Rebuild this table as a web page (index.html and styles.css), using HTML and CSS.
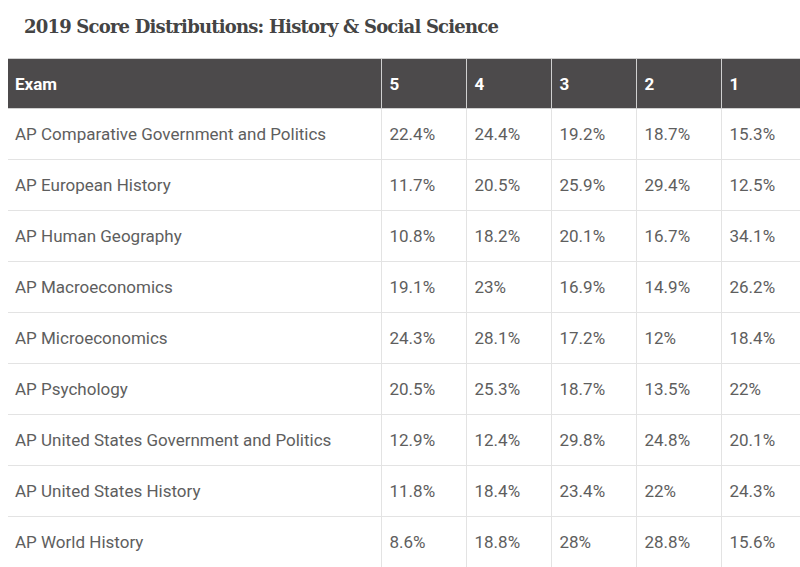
FILE: index.html
```html
<!DOCTYPE html>
<html>
<head>
<meta charset="utf-8">
<link rel="stylesheet" href="styles.css">
</head>
<body>
<h2 class="title">2019 Score Distributions: History &amp; Social Science</h2>
<table class="scores">
  <colgroup>
    <col class="col-exam">
    <col class="col-score"><col class="col-score"><col class="col-score"><col class="col-score"><col>
  </colgroup>
  <thead>
    <tr><th>Exam</th><th>5</th><th>4</th><th>3</th><th>2</th><th>1</th></tr>
  </thead>
  <tbody>
    <tr><td>AP Comparative Government and Politics</td><td>22.4%</td><td>24.4%</td><td>19.2%</td><td>18.7%</td><td>15.3%</td></tr>
    <tr><td>AP European History</td><td>11.7%</td><td>20.5%</td><td>25.9%</td><td>29.4%</td><td>12.5%</td></tr>
    <tr><td>AP Human Geography</td><td>10.8%</td><td>18.2%</td><td>20.1%</td><td>16.7%</td><td>34.1%</td></tr>
    <tr><td>AP Macroeconomics</td><td>19.1%</td><td>23%</td><td>16.9%</td><td>14.9%</td><td>26.2%</td></tr>
    <tr><td>AP Microeconomics</td><td>24.3%</td><td>28.1%</td><td>17.2%</td><td>12%</td><td>18.4%</td></tr>
    <tr><td>AP Psychology</td><td>20.5%</td><td>25.3%</td><td>18.7%</td><td>13.5%</td><td>22%</td></tr>
    <tr><td>AP United States Government and Politics</td><td>12.9%</td><td>12.4%</td><td>29.8%</td><td>24.8%</td><td>20.1%</td></tr>
    <tr><td>AP United States History</td><td>11.8%</td><td>18.4%</td><td>23.4%</td><td>22%</td><td>24.3%</td></tr>
    <tr><td>AP World History</td><td>8.6%</td><td>18.8%</td><td>28%</td><td>28.8%</td><td>15.6%</td></tr>
  </tbody>
</table>
</body>
</html>
```
FILE: styles.css
```css
html {
  overflow: hidden;
}
body {
  margin: 8px 0 0 8px;
  background: #fff;
  font-family: Roboto, "Liberation Sans", sans-serif;
  color: #5e5e5e;
}
.title {
  margin: 0 0 0 16px;
  height: 50px;
  line-height: 38px;
  font-family: "DejaVu Serif", serif;
  font-size: 18px;
  font-weight: bold;
  letter-spacing: -0.8px;
  color: #444;
}
.scores {
  border-collapse: collapse;
  width: 100%;
  table-layout: fixed;
  font-size: 17px;
}
.col-exam {
  width: 373px;
}
.col-score {
  width: 85px;
}
.scores th, .scores td {
  text-align: left;
  padding: 0 8px;
  border: 1px solid #e3e3e3;
  white-space: nowrap;
}
.scores th {
  background: #4c4a4b;
  color: #fff;
  font-weight: bold;
  height: 49px;
  border-color: #d0d0d0;
}
.scores td {
  height: 50px;
}
.scores tr > :first-child {
  border-left: none;
  padding-left: 7px;
}
.scores tr > :last-child {
  border-right: none;
}
```
